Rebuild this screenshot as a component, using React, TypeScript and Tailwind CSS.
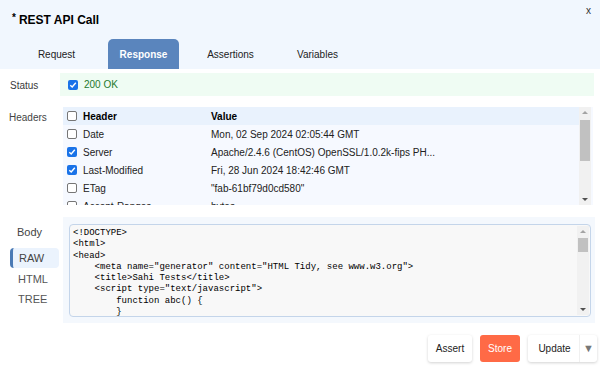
import React from 'react';

const headerRows = [
  { name: 'Date', value: 'Mon, 02 Sep 2024 02:05:44 GMT', checked: false },
  { name: 'Server', value: 'Apache/2.4.6 (CentOS) OpenSSL/1.0.2k-fips PH...', checked: true },
  { name: 'Last-Modified', value: 'Fri, 28 Jun 2024 18:42:46 GMT', checked: true },
  { name: 'ETag', value: '"fab-61bf79d0cd580"', checked: false },
  { name: 'Accept-Ranges', value: 'bytes', checked: false },
];

const codeLines = [
  '<!DOCTYPE>',
  '<html>',
  '<head>',
  '    <meta name="generator" content="HTML Tidy, see www.w3.org">',
  '    <title>Sahi Tests</title>',
  '    <script type="text/javascript">',
  '        function abc() {',
  '        }',
];

const Check = ({ checked }: { checked: boolean }) =>
  checked ? (
    <span className="w-[10px] h-[10px] rounded-[2px] bg-[#1a73e8] flex items-center justify-center shrink-0">
      <svg width="8" height="8" viewBox="0 0 8 8">
        <path d="M1.3 4.2 L3.2 6 L6.8 1.8" stroke="white" strokeWidth="1.4" fill="none" />
      </svg>
    </span>
  ) : (
    <span className="w-[10px] h-[10px] rounded-[2px] border border-[#767676] bg-white shrink-0" />
  );

const Scrollbar = ({ thumbTop, thumbHeight }: { thumbTop: number; thumbHeight: number }) => (
  <div className="w-[12px] h-full bg-[#f1f1f1] relative shrink-0">
    <span className="absolute top-[4px] left-[3px] w-0 h-0 border-l-[3px] border-r-[3px] border-b-[3px] border-l-transparent border-r-transparent border-b-[#a3a3a3]" />
    <div className="absolute left-[1px] w-[10px] bg-[#c1c1c1]" style={{ top: thumbTop, height: thumbHeight }} />
    <span className="absolute bottom-[4px] left-[3px] w-0 h-0 border-l-[3px] border-r-[3px] border-t-[3px] border-l-transparent border-r-transparent border-t-[#505050]" />
  </div>
);

export default function App() {
  return (
    <div className="w-[600px] h-[369px] bg-white overflow-hidden relative font-['Liberation_Sans',Arial,sans-serif] text-[10px] text-[#222]">
      <div className="h-[69px] bg-[#f1f7fe] flex flex-col">
        <div className="h-[39px] flex items-center pl-[12px] text-[12px] font-bold text-black">
          <span className="text-[10px] mr-[3px] -mt-[4px]">*</span>REST API Call
        </div>
        <div className="flex gap-[16px] pl-[21px] h-[30px]">
          {['Request', 'Response', 'Assertions', 'Variables'].map((t) => (
            <div
              key={t}
              className={
                t === 'Response'
                  ? 'w-[71px] flex items-center justify-center rounded-t-[5px] bg-[#5a85bd] text-white font-bold text-[10px]'
                  : 'w-[71px] flex items-center justify-center text-[#222] text-[10px]'
              }
            >
              {t}
            </div>
          ))}
        </div>
        <span className="absolute top-[3px] right-[9px] text-[10px] text-[#333]">x</span>
      </div>

      <div className="flex mt-[4px]">
        <div className="w-[60px] pl-[10px] pt-[5px] text-[#3a3a3a] font-medium">Status</div>
        <div className="w-[534px] h-[23px] bg-[#effcf3] flex items-center gap-[6px] pl-[8px]">
          <Check checked />
          <span className="text-[#1f7a2e] text-[10px]">200 OK</span>
        </div>
      </div>

      <div className="flex mt-[11px]">
        <div className="w-[63px] pl-[9px] pt-[3px] text-[#444]">Headers</div>
        <div className="w-[530px] h-[98px] flex bg-[#f6f9ff] overflow-hidden">
          <div className="flex-1 flex flex-col">
            <div className="h-[18px] shrink-0 bg-[#e9f2fd] flex items-center font-bold text-black">
              <div className="w-[148px] flex items-center gap-[6px] pl-[4px]">
                <Check checked={false} />
                <span>Header</span>
              </div>
              <span>Value</span>
            </div>
            {headerRows.map((r) => (
              <div key={r.name} className="h-[18px] shrink-0 flex items-center text-[#222]">
                <div className="w-[148px] flex items-center gap-[6px] pl-[4px]">
                  <Check checked={r.checked} />
                  <span>{r.name}</span>
                </div>
                <span>{r.value}</span>
              </div>
            ))}
          </div>
          <Scrollbar thumbTop={13} thumbHeight={41} />
          <div className="w-[2px]" />
        </div>
      </div>

      <div className="flex mt-[12px]">
        <div className="w-[63px] flex flex-col pl-[10px] pt-[5px] text-[11px] text-[#555]">
          <div className="pl-[7px] h-[20px] flex items-center text-[#444]">Body</div>
          <div className="mt-[6px] h-[20px] w-[49px] flex items-center pl-[6px] bg-[#ebf3fd] border-l-[3px] border-[#4a7ab5] rounded-[4px] text-[#444]">RAW</div>
          <div className="pl-[8px] h-[20px] flex items-center mt-[1px]">HTML</div>
          <div className="pl-[8px] h-[20px] flex items-center">TREE</div>
        </div>
        <div className="w-[532px] h-[106px] bg-[#f4f8fd] pt-[7px] pl-[6px] pr-[4px] pb-[6px]">
          <div className="h-[93px] flex border border-[#c4d5ea] rounded-[4px] bg-[#f8f8f8] overflow-hidden">
            <pre className="flex-1 pl-[3px] pt-[3px] font-['Liberation_Mono',monospace] text-[9px] leading-[11.3px] text-black overflow-hidden">
              {codeLines.join('\n')}
            </pre>
            <div className="py-[1px] pr-[1px] h-full">
              <Scrollbar thumbTop={12} thumbHeight={14} />
            </div>
          </div>
        </div>
      </div>

      <div className="flex justify-end gap-[8px] pr-[3px] mt-[12px] text-[10px]">
        <div className="w-[44px] h-[27px] flex items-center justify-center bg-white rounded-[3px] shadow-[0_1px_3px_rgba(0,0,0,0.18)] text-[#222]">Assert</div>
        <div className="w-[40px] h-[27px] flex items-center justify-center bg-[#ff6a46] rounded-[3px] text-white">Store</div>
        <div className="w-[69px] h-[27px] flex items-center bg-white rounded-[3px] shadow-[0_1px_3px_rgba(0,0,0,0.18)] text-[#222]">
          <span className="flex-1 text-center pl-[2px]">Update</span>
          <span className="w-[18px] h-full flex items-center justify-center border-l border-[#f0f0f0] text-[#777] text-[11px]">▼</span>
        </div>
      </div>
    </div>
  );
}
